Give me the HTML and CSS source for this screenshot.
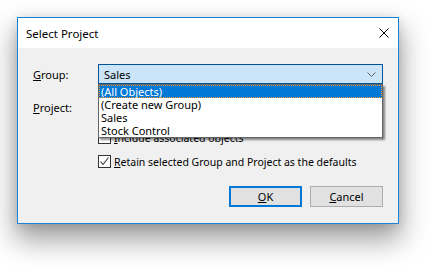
FILE: index.html
```html
<!DOCTYPE html>
<html lang="en">
<head>
    <meta charset="UTF-8">
    <title>Select Project</title>
    <link rel="stylesheet" href="styles.css">
</head>
<body>
    <div class="dialog">
        <div class="titlebar">
            <span class="title">Select Project</span>
            <svg class="close" width="10" height="10" viewBox="0 0 10 10">
                <path d="M0.5 0.5 L9.5 9.5 M9.5 0.5 L0.5 9.5" stroke="#000" stroke-width="1" fill="none"/>
            </svg>
        </div>
        <div class="content">
            <div class="row">
                <label class="label"><u>G</u>roup:</label>
                <div class="combo open">
                    <span class="combo-value">Sales</span>
                    <svg class="chevron" width="9" height="5" viewBox="0 0 9 5">
                        <path d="M0.5 0.5 L4.5 4.5 L8.5 0.5" stroke="#606060" stroke-width="1" fill="none"/>
                    </svg>
                    <ul class="list">
                        <li class="selected">(All Objects)</li>
                        <li>(Create new Group)</li>
                        <li>Sales</li>
                        <li>Stock Control</li>
                    </ul>
                </div>
            </div>
            <div class="row">
                <label class="label"><u>P</u>roject:</label>
                <div class="combo">
                    <span class="combo-value"></span>
                </div>
            </div>
            <div class="check-row">
                <span class="box"></span>
                <span><u>I</u>nclude associated objects</span>
            </div>
            <div class="check-row">
                <span class="box">
                    <svg width="11" height="11" viewBox="0 0 11 11">
                        <path d="M1.5 5.5 L4 8.5 L9.5 1.5" stroke="#333" stroke-width="1.1" fill="none"/>
                    </svg>
                </span>
                <span><u>R</u>etain selected Group and Project as the defaults</span>
            </div>
            <div class="actions">
                <button class="btn default"><u>O</u>K</button>
                <button class="btn"><u>C</u>ancel</button>
            </div>
        </div>
    </div>
</body>
</html>
```

FILE: styles.css
```css
html {
    background-color: #ffffff;
}
body {
    margin: 0;
    min-height: 273px;
    box-sizing: border-box;
    padding: 17px 0 0 17px;
    font-family: "Noto Sans", sans-serif;
    font-size: 10.5px;
    color: #000;
}
.dialog {
    width: 380px;
    border: 1px solid #1883d7;
    box-shadow: 0 14px 26px 2px rgba(0, 0, 0, 0.38), 0 2px 10px rgba(0, 0, 0, 0.12);
}
.titlebar {
    height: 30px;
    background-color: #ffffff;
    display: flex;
    align-items: center;
    justify-content: space-between;
    padding: 0 9px 0 8px;
}
.title {
    font-size: 11.5px;
}
.content {
    background-color: #f0f0f0;
    padding: 16px 15px;
}
.row {
    display: grid;
    grid-template-columns: 65px 1fr;
    align-items: center;
    height: 20px;
    margin-bottom: 13px;
}
.row .label {
    font-size: 11px;
}
.row + .row {
    margin-bottom: 14px;
}
.combo {
    position: relative;
    height: 20px;
    box-sizing: border-box;
    border: 1px solid #7a7a7a;
    background-color: #ffffff;
    display: flex;
    align-items: center;
    padding: 0 5px;
    font-size: 11px;
}
.combo.open {
    background-color: #cce4f7;
    border-color: #005499;
}
.combo-value {
    flex: 1;
}
.chevron {
    margin-right: 1px;
}
.list {
    position: absolute;
    left: -1px;
    right: -1px;
    top: 19px;
    margin: 0;
    padding: 0;
    list-style: none;
    background-color: #ffffff;
    border: 1px solid #646464;
    box-shadow: 2px 2px 2px rgba(0, 0, 0, 0.45);
    z-index: 2;
}
.list li {
    height: 13px;
    line-height: 13px;
    padding-left: 2px;
    box-sizing: border-box;
    white-space: nowrap;
}
.list li.selected {
    background-color: #0078d7;
    color: #ffffff;
    outline: 1px dotted #f39a2c;
    outline-offset: -1px;
}
.check-row {
    display: flex;
    align-items: center;
    gap: 3px;
    height: 13px;
    margin-left: 65px;
    margin-bottom: 11px;
    white-space: nowrap;
}
.box {
    flex: none;
    width: 13px;
    height: 13px;
    box-sizing: border-box;
    border: 1px solid #333333;
    background-color: #ffffff;
    display: flex;
    align-items: center;
    justify-content: center;
}
.actions {
    display: flex;
    justify-content: flex-end;
    gap: 8px;
    margin-top: 18px;
}
.btn {
    width: 73px;
    height: 21px;
    padding: 0;
    font-family: inherit;
    font-size: 11px;
    background-color: #e1e1e1;
    border: 1px solid #adadad;
    color: #000;
}
.btn.default {
    border: 2px solid #0078d7;
}
```
